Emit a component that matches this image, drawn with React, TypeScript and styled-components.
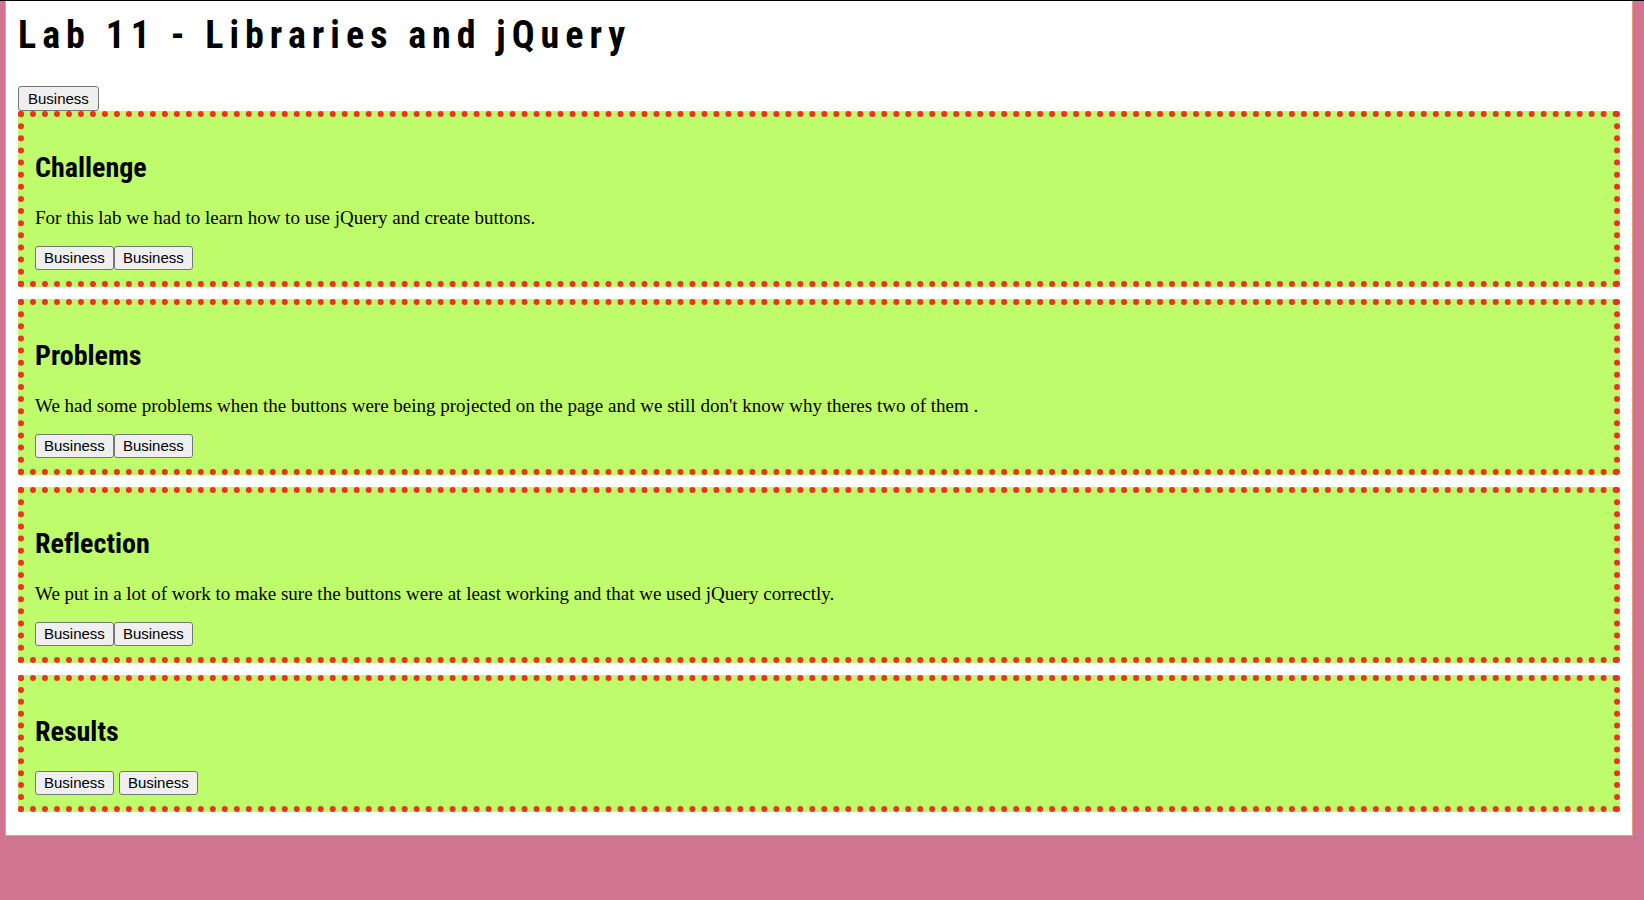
import React from "react";
import styled, { createGlobalStyle } from "styled-components";

const GlobalStyle = createGlobalStyle`
  *, *::before, *::after { box-sizing: border-box; }
  body {
    margin: 0;
    background: #d0758f;
    color: #000;
    font-family: "Liberation Serif", "Times New Roman", serif;
    font-size: 19px;
    line-height: 22px;
  }
`;

const headingFont = `"Arial Narrow", "Liberation Sans Narrow", "Roboto Condensed", "Liberation Sans", sans-serif`;

const Page = styled.div`
  border-top: 1px solid #000;
  padding: 0 11px 64px 5px;
`;

const Main = styled.main`
  background: #fff;
  border: 1px solid #e8a07c;
  border-top: 0;
  padding: 12px 12px 23px;
`;

const Title = styled.h1`
  margin: 0 0 29px;
  font-family: ${headingFont};
  font-size: 38px;
  line-height: 44px;
  letter-spacing: 6px;
`;

const SectionTitle = styled.h2`
  margin: 24px 0 23px;
  font-family: ${headingFont};
  font-size: 28px;
  line-height: 32px;
  font-variant-ligatures: none;
`;

const Sections = styled.div`
  display: grid;
  gap: 12px;
`;

const Section = styled.section`
  background: #befc6b;
  border: 6px dotted #ea3323;
  padding: 11px;
`;

const Text = styled.p`
  margin: 0 0 17px;
`;

const Buttons = styled.div<{ $gap?: number }>`
  display: flex;
  gap: ${({ $gap = 0 }) => $gap}px;
`;

const Button = styled.button<{ $large?: boolean }>`
  height: ${({ $large }) => ($large ? 25 : 24)}px;
  padding: 0 ${({ $large }) => ($large ? 9 : 8)}px;
  border: 1px solid #767676;
  border-radius: 3px;
  background: #efefef;
  color: #000;
  font-family: "Liberation Sans", Arial, sans-serif;
  font-size: 15px;
  line-height: 20px;
`;

const entries = [
  {
    title: "Challenge",
    text: "For this lab we had to learn how to use jQuery and create buttons.",
  },
  {
    title: "Problems",
    text: "We had some problems when the buttons were being projected on the page and we still don't know why theres two of them .",
  },
  {
    title: "Reflection",
    text: "We put in a lot of work to make sure the buttons were at least working and that we used jQuery correctly.",
  },
  { title: "Results" },
];

export default function App() {
  return (
    <Page>
      <GlobalStyle />
      <Main>
        <Title>Lab 11 - Libraries and jQuery</Title>
        <Buttons>
          <Button type="button" $large>Business</Button>
        </Buttons>
        <Sections>
          {entries.map(({ title, text }) => (
            <Section key={title}>
              <SectionTitle>{title}</SectionTitle>
              {text && <Text>{text}</Text>}
              <Buttons $gap={text ? 0 : 5}>
                <Button type="button">Business</Button>
                <Button type="button">Business</Button>
              </Buttons>
            </Section>
          ))}
        </Sections>
      </Main>
    </Page>
  );
}
